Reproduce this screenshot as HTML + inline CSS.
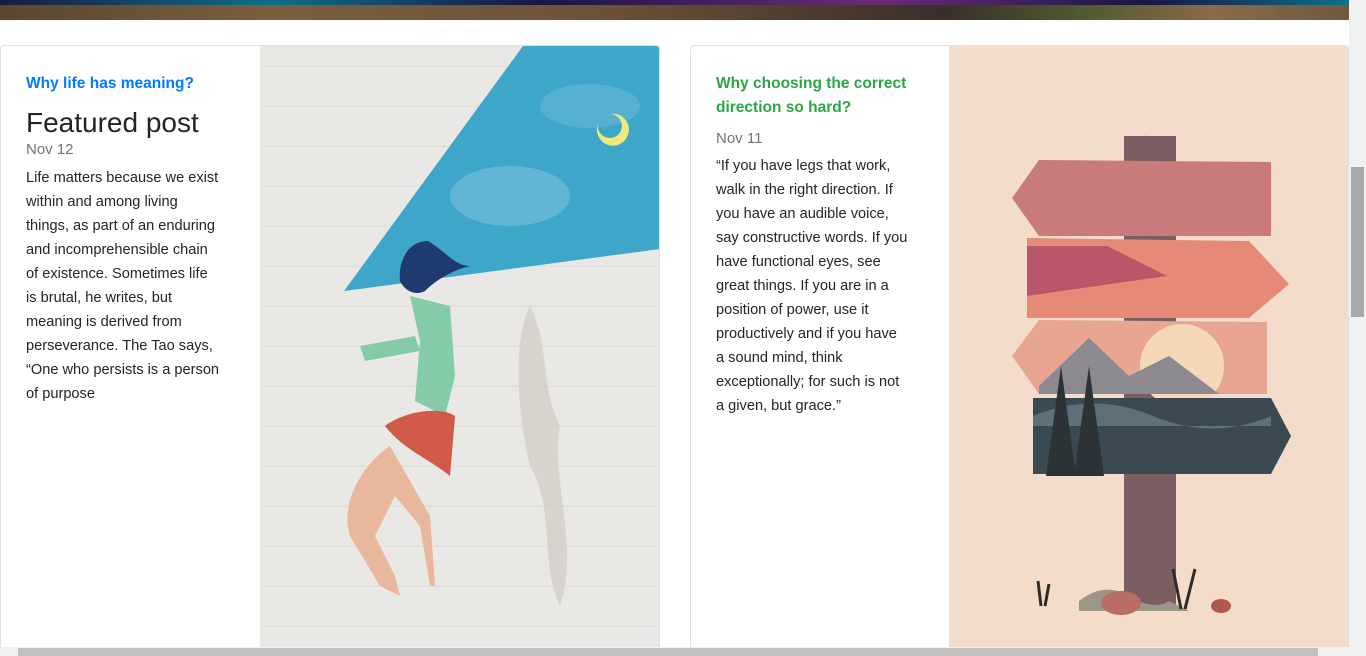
<!DOCTYPE html>
<html><head><meta charset="utf-8"><style>
*{margin:0;padding:0;box-sizing:border-box}
html,body{width:1366px;height:656px;overflow:hidden;background:#fff;font-family:"Segoe UI","Liberation Sans",sans-serif;position:relative}
.top{position:absolute;left:0;top:0;width:1349px;height:20px;background:linear-gradient(90deg,#5a4630,#7a5f3e 20%,#6b5236 45%,#3a2f2a 70%,#4f5a2e 80%,#8a6a48 90%,#6e5a40)}
.top:before{content:"";position:absolute;left:0;top:0;right:0;height:5px;background:linear-gradient(90deg,#1a1a40,#0d6f8a 20%,#1a1545 40%,#6a2d78 65%,#1a1545 85%,#0d6f8a)}
.card{position:absolute;top:45px;height:620px;border:1px solid #dfe1e4;border-radius:4px;background:#fff;overflow:hidden}
.txt{position:absolute;left:25px;top:26px;width:225px;font-size:14.6px;line-height:24px;color:#212529;white-space:nowrap}
.t{font-weight:bold;font-size:15.5px;line-height:24px}
.h{font-size:28px;line-height:32px;margin-top:11px;font-weight:500}
.d{color:#6c757d;font-size:15px;line-height:22px}
.img{position:absolute;top:0;height:620px;width:400px}
.sb{position:absolute;left:1349px;top:0;width:17px;height:648px;background:#f1f1f1}
.hb{position:absolute;left:0;top:647px;width:1366px;height:9px;background:#f1f1f1}
</style></head><body>
<div class="top"></div>
<div class="card" style="left:0;width:660px">
 <div class="txt">
  <div class="t" style="color:#007bff;margin-top:0">Why life has meaning?</div>
  <div class="h">Featured post</div>
  <div class="d">Nov 12</div>
  <div style="margin-top:5px">Life matters because we exist<br>within and among living<br>things, as part of an enduring<br>and incomprehensible chain<br>of existence. Sometimes life<br>is brutal, he writes, but<br>meaning is derived from<br>perseverance. The Tao says,<br>“One who persists is a person<br>of purpose</div>
 </div>
 <svg class="img" style="left:259px" viewBox="0 0 400 620">
  <rect width="400" height="620" fill="#e9e8e4"/>
  <g stroke="#dcdbd6" stroke-width="1">
   <path d="M0 20H400M0 60H400M0 100H400M0 140H400M0 180H400M0 220H400M0 260H400M0 300H400M0 340H400M0 380H400M0 420H400M0 460H400M0 500H400M0 540H400M0 580H400"/>
  </g>
  <polygon points="263,0 400,0 400,203 84,245" fill="#3ea6c9"/>
  <ellipse cx="250" cy="150" rx="60" ry="30" fill="#79c2dc" opacity=".6"/>
  <ellipse cx="330" cy="60" rx="50" ry="22" fill="#6dbcd8" opacity=".5"/>
  <path d="M338 78a16 16 0 1 0 12 -10a12 12 0 1 1 -12 10z" fill="#f1e77a"/>
  <path d="M168 195c-20 0-30 20-28 40 5 10 15 15 25 10 10-10 25-20 45-25-15 0-25-15-42-25z" fill="#1e3a6e"/>
  <path d="M150 250l10 45 -5 60 30 15 10-40 -5-70z" fill="#86cba8"/>
  <path d="M100 300l55 -10 5 15 -55 10z" fill="#86cba8"/>
  <path d="M125 380c20-15 55-20 70-10l-5 60c-25-20-45-25-65-50z" fill="#d25a48"/>
  <path d="M130 400c-30 20-50 60-40 90l30 50 20 10 -5-20-20-40 20-40 25 30 10 60 5 0-5-70z" fill="#e9b79b"/>
  <path d="M270 260c20 40 10 80 30 120 -10 50 20 120 0 180-20-40-5-100-30-140-10-40-20-120 0-160z" fill="#cfccc4" opacity=".7"/>
 </svg>
</div>
<div class="card" style="left:690px;width:659px">
 <div class="txt">
  <div class="t" style="color:#28a745">Why choosing the correct<br>direction so hard?</div>
  <div class="d" style="margin-top:8px">Nov 11</div>
  <div style="margin-top:4px">“If you have legs that work,<br>walk in the right direction. If<br>you have an audible voice,<br>say constructive words. If you<br>have functional eyes, see<br>great things. If you are in a<br>position of power, use it<br>productively and if you have<br>a sound mind, think<br>exceptionally; for such is not<br>a given, but grace.”</div>
 </div>
 <svg class="img" style="left:258px;width:401px" viewBox="0 0 401 620">
  <rect width="401" height="620" fill="#f4dccc"/>
  <rect x="175" y="90" width="52" height="470" fill="#7a5e62"/>
  <path d="M175 92q25-5 52 2v22h-52z" fill="#7a5e62"/>
  <polygon points="90,114 322,116 322,190 90,190 63,152" fill="#c87a7c"/>
  <polygon points="78,192 300,195 340,238 300,272 78,272" fill="#e68a78"/>
  <path d="M78 200l80 0 60 30-140 20z" fill="#b8566a"/>
  <polygon points="90,274 318,276 318,348 90,348 63,310" fill="#e8a592"/>
  <circle cx="233" cy="320" r="42" fill="#f4d8b8"/>
  <polygon points="90,340 140,292 180,330 220,310 270,348 90,348" fill="#8c8a90"/>
  <polygon points="84,352 322,352 342,390 322,428 84,428" fill="#3b4a52"/>
  <path d="M84 370q60-25 120 0t118 0v10H84z" fill="#5d7079"/>
  <path d="M112 320l-15 110h30zM140 320l-15 110h30z" fill="#2b3336"/>
  <path d="M130 555q25-20 50-5t40 5l20 10H130z" fill="#9c9689"/>
  <ellipse cx="172" cy="557" rx="20" ry="12" fill="#b86e62"/>
  <ellipse cx="272" cy="560" rx="10" ry="7" fill="#b0584e"/>
  <path d="M92 560l-3-25M96 560l4-22M232 563l-8-40M236 563l10-40" stroke="#2b2d2c" stroke-width="3"/>
 </svg>
</div>
<div class="sb"><div style="position:absolute;left:2px;top:167px;width:13px;height:150px;background:#a8a8a8"></div></div>
<div class="hb"><div style="position:absolute;left:18px;top:1px;width:1300px;height:8px;background:#c1c1c1"></div></div>
</body></html>
